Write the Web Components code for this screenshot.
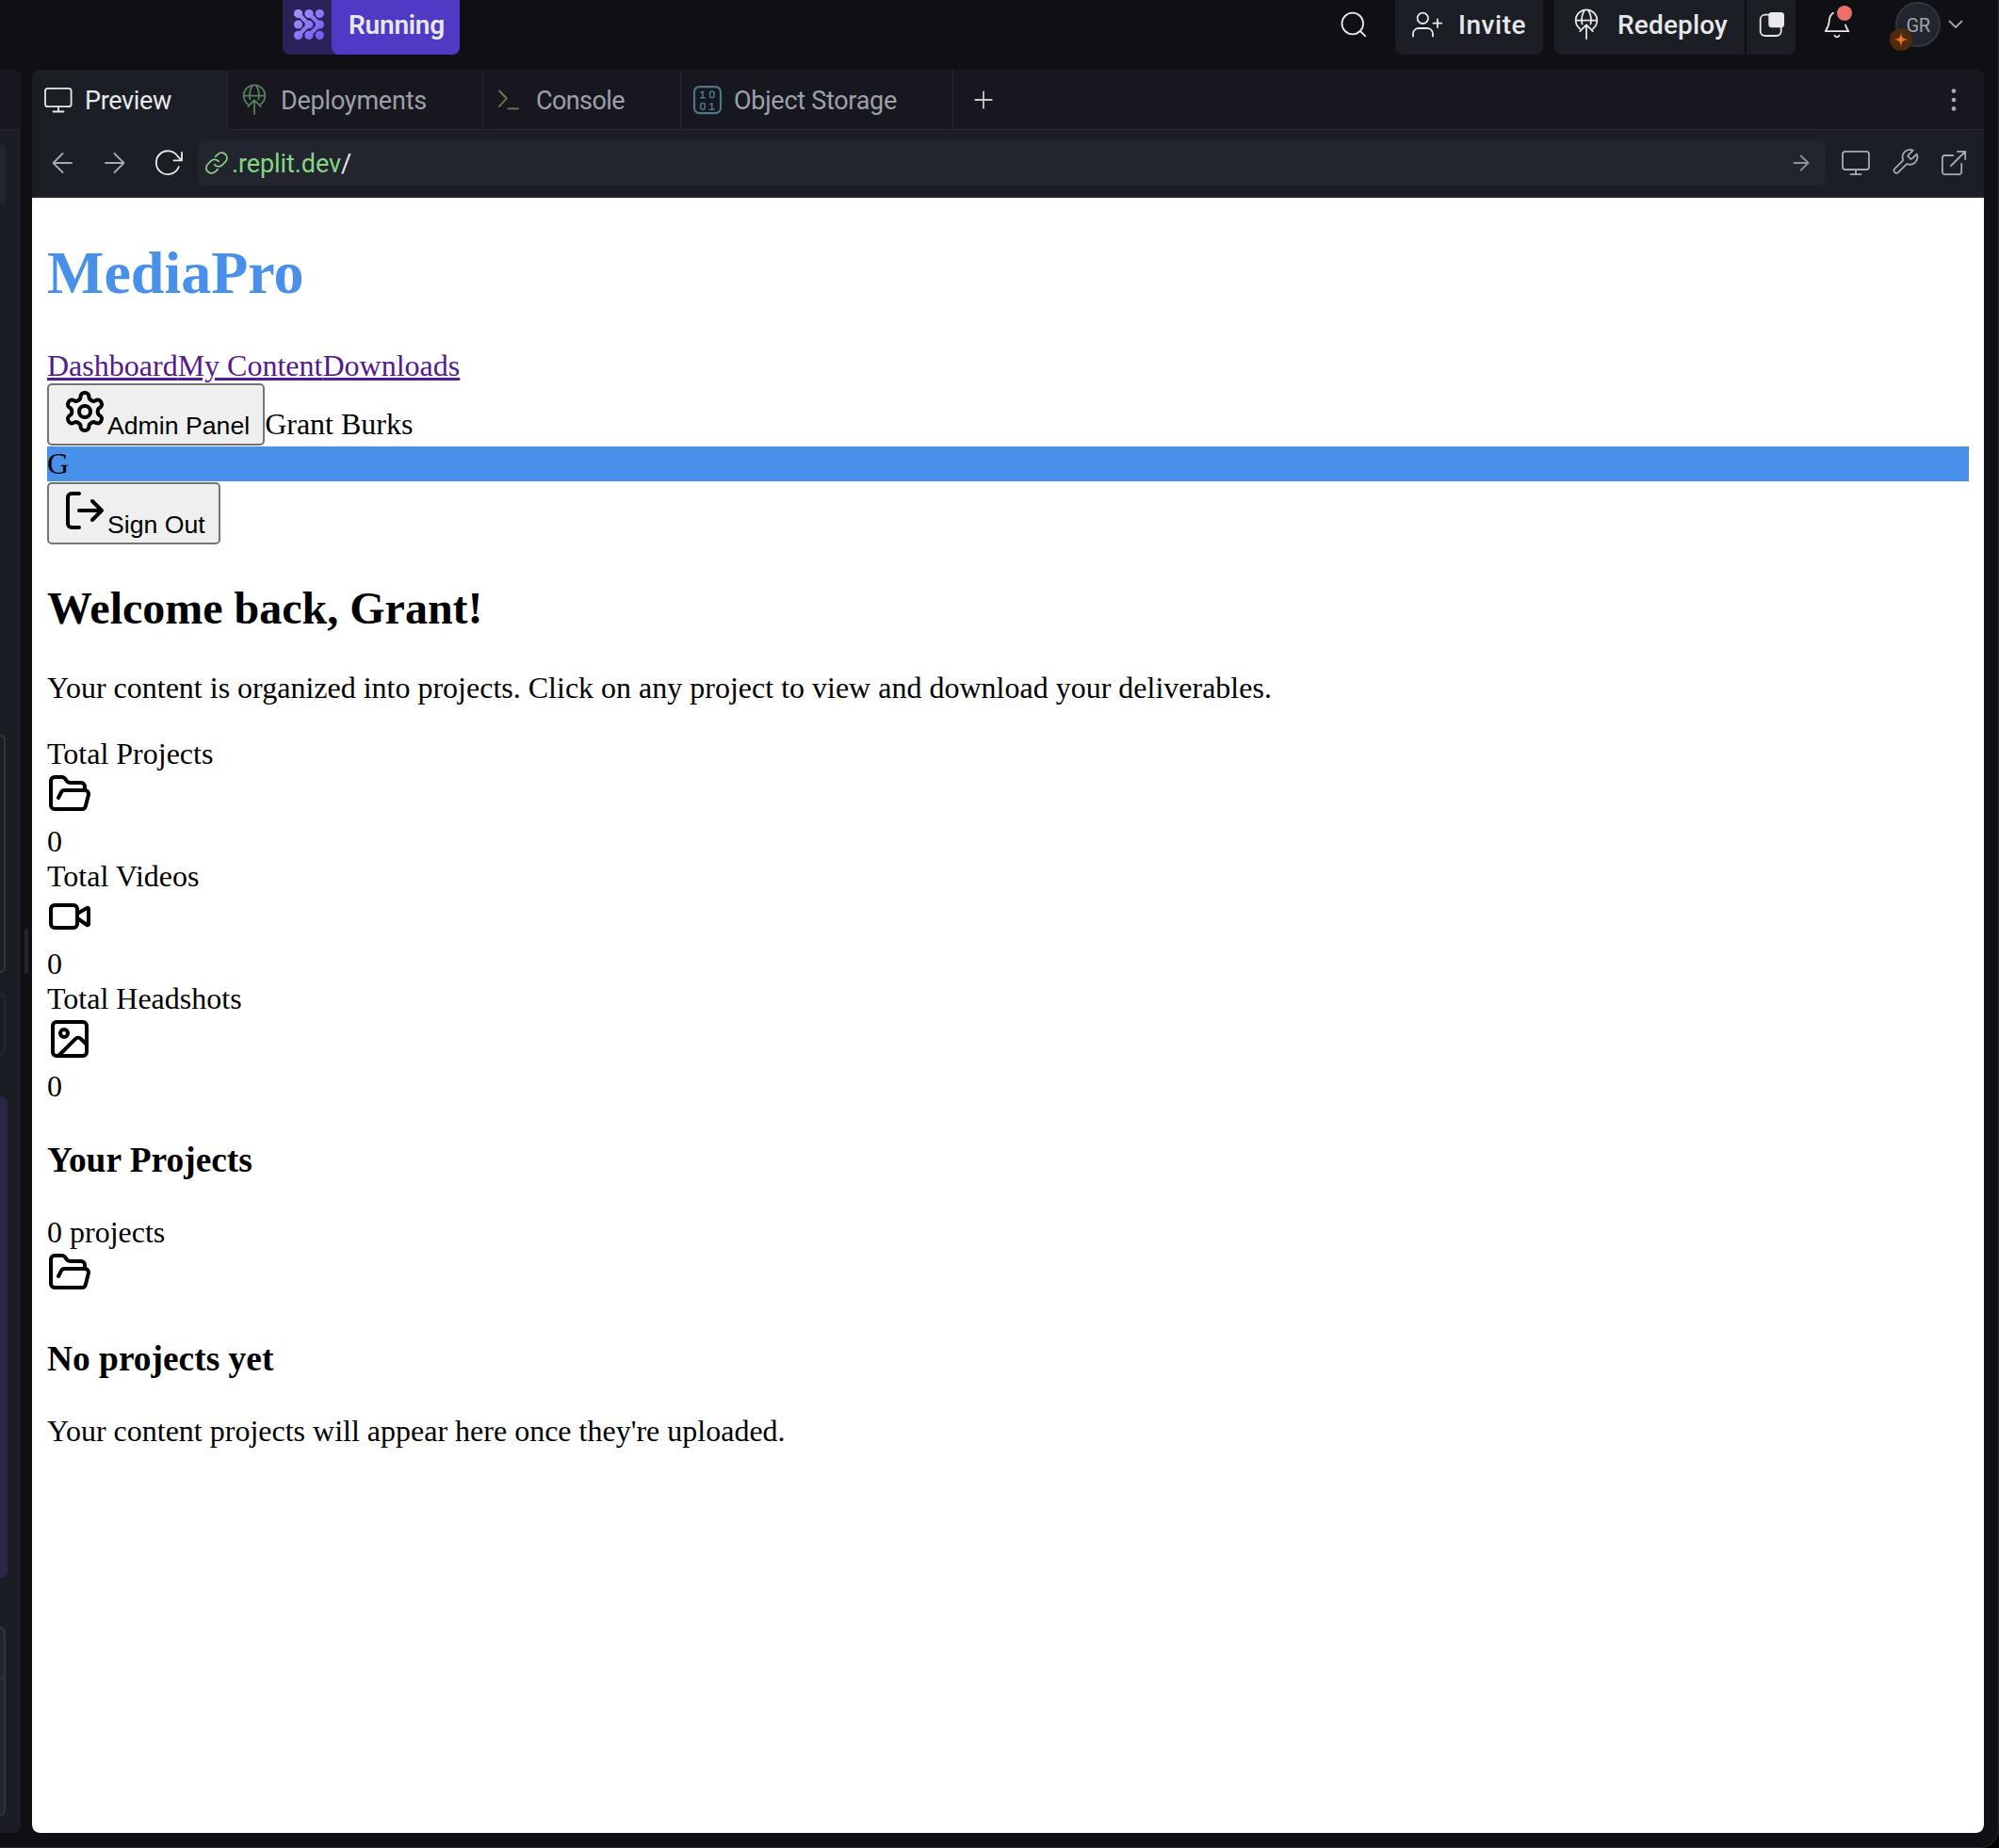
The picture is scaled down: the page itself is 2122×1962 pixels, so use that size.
<!DOCTYPE html>
<html lang="en">
<head>
<meta charset="utf-8">
<title>MediaPro - Preview</title>
<style>
html{background:#000}
body{margin:0;width:2122px;height:1962px;overflow:hidden}
</style>
</head>
<body>
<app-window></app-window>
<script>
const define = (name, html, setup) => customElements.define(name, class extends HTMLElement {
  connectedCallback() {
    if (this.shadowRoot) return;
    const t = document.createElement('template');
    t.innerHTML = typeof html === 'function' ? html(this) : html;
    this.attachShadow({ mode: 'open' }).appendChild(t.content.cloneNode(true));
    if (setup) setup(this);
  }
});

/* name: [viewBox, markup]; the box size is the size of the viewBox */
const globe = (x, y) => `<g transform="translate(${x} ${y})"><path d="M-7 8.9A11.3 11.3 0 1 1 7 8.9M-11.2 0H11.2M-4.5 4C-5.8-1-4.6-7.500-1.800-11M4.500 4C5.800-1 4.600-7.500 1.800-11M0 5V19.500M-6.800 11.500L0 4.700L6.800 11.500"/></g>`;
const ICONS = {
  agent: ['308 6 40 40', `<defs><linearGradient id="g" x1="312" y1="10" x2="344" y2="42" gradientUnits="userSpaceOnUse"><stop stop-color="#a698fb"/><stop offset="1" stop-color="#6f55f2"/></linearGradient></defs>
    <g fill="url(#g)" stroke="none"><circle cx="316.600" cy="14.600" r="4.600"/><circle cx="328" cy="14.600" r="4.600"/><circle cx="339.400" cy="14.600" r="4.600"/><circle cx="316.600" cy="26" r="4.600"/><circle cx="328" cy="26" r="4.300"/><circle cx="339.400" cy="26" r="4.600"/><circle cx="316.600" cy="37.400" r="4.600"/><circle cx="328" cy="37.400" r="4.600"/><circle cx="339.400" cy="37.400" r="4.600"/></g>
    <g stroke="url(#g)" stroke-width="4.200"><path d="M316.600 14.600L328 26L316.600 37.400M328 14.600L339.400 26L328 37.400"/></g>`],
  search: ['1420 10 32 32', '<circle cx="1435.800" cy="25" r="11.300"/><path d="M1444 33L1449.300 38.300"/>'],
  invite: ['1496 10 36 32', '<circle cx="1510.300" cy="19.300" r="5.700"/><path d="M1500 38.500V35.500A6 6 0 0 1 1506 30H1515A6 6 0 0 1 1521 35.500V38.500M1526 20.500V29M1521.500 24.700H1530.300"/>'],
  redeploy: ['1668 10 32 32', globe(1684, 21.6)],
  copy: ['1866 10 30 32', '<rect x="1868.700" y="15.700" width="22" height="22.300" rx="5"/><rect x="1877.300" y="13" width="16.700" height="16.300" rx="3.500" fill="#e9eaee" stroke="none"/>'],
  bell: ['1934 4 36 44', '<path d="M1946 13.800C1942.700 16 1942 18.500 1941.800 22C1941.600 27 1940.500 29 1937.800 33.200H1962.300C1960.800 31 1959.800 29.500 1959 26.500"/><path d="M1947.500 37.600C1948.800 40 1951.200 40 1952.500 37.600"/><circle cx="1958" cy="14" r="8" fill="#f07069" stroke="none"/>'],
  chev: ['2066 16 20 20', '<path d="M2069.500 22.500L2076 29L2082.500 22.500"/>'],
  star: ['2006 30 24 24', '<path fill="currentColor" stroke="none" d="M2018 34C2018.700 40 2019.700 41.300 2026 42C2019.700 42.700 2018.700 44 2018 50C2017.300 44 2016.300 42.700 2010 42C2016.300 41.300 2017.300 40 2018 34Z"/>'],
  monitor: ['46 90 32 32', '<rect x="48" y="93.800" width="27.600" height="19.400" rx="2.800"/><path d="M62 113.500V118.500M56.500 118.500H67.500"/>'],
  deploy: ['254 90 32 32', globe(270, 101.6)],
  console: ['526 90 32 32', '<path d="M528 96.500L535.800 104.500L528 113M537.500 115.400H548"/>'],
  storage: ['735 90 32 32', '<rect x="737" y="92.200" width="28" height="28" rx="5.500" stroke-width="2.200"/><path stroke-width="1.500" d="M744 98.400L746 97V103.800M743.600 103.800H748.400M753.800 110.900L755.800 109.500V116.300M753.400 116.300H758.200"/><rect x="753.600" y="97" width="4.400" height="6.800" rx="2" stroke-width="1.500"/><rect x="743.800" y="109.500" width="4.400" height="6.800" rx="2" stroke-width="1.500"/>'],
  plus: ['1032 94 24 24', '<path d="M1044 97.300V114.700M1035.300 106H1052.700"/>'],
  dots: ['2066 90 16 32', '<g fill="currentColor" stroke="none"><circle cx="2074" cy="96.600" r="2.300"/><circle cx="2074" cy="106" r="2.300"/><circle cx="2074" cy="115.400" r="2.300"/></g>'],
  back: ['54 161 24 24', '<path d="M76 173H56.500M66.500 163L56.500 173L66.500 183"/>'],
  fwd: ['110 161 24 24', '<path d="M112 173H131.500M121.500 163L131.500 173L121.500 183"/>'],
  reload: ['163 157 32 32', '<path d="M189.800 177A12.400 12.400 0 1 1 188.500 165.800L192.800 170.200M193 162V170.400H184.500"/>'],
  link: ['218 161 24 24', '<g transform="translate(216.600 159.700) scale(1.110)" stroke-width="1.500"><path d="M10 13.500a5 5 0 0 0 7.400.4l3-3a5 5 0 0 0-7-7.300l-2.600 2.500"/><path d="M14 10.500a5 5 0 0 0-7.400-.4l-3 3a5 5 0 0 0 7 7.300l2.600-2.500"/></g>'],
  go: ['1902 163 20 20', '<path d="M1904.500 173H1919.500M1911.700 165.500L1919.500 173L1911.700 180.700"/>'],
  device: ['1954 157 32 32', '<rect x="1956" y="160.800" width="28" height="19.200" rx="2.800"/><path d="M1970 180V185.200M1964.500 185.200H1975.500"/>'],
  wrench: ['2007 157 32 32', '<g transform="translate(2006.500 156.300) scale(1.310)"><path stroke-width="1.350" d="M14.700 6.300a1 1 0 0 0 0 1.400l1.600 1.600a1 1 0 0 0 1.400 0l3.770-3.770a6 6 0 0 1-7.940 7.940l-6.910 6.910a2.120 2.120 0 0 1-3-3l6.910-6.910a6 6 0 0 1 7.940-7.940l-3.760 3.760z"/></g>'],
  ext: ['2058 157 32 32', '<path d="M2073.300 165H2064.500A2.600 2.600 0 0 0 2061.900 167.600V182.600A2.600 2.600 0 0 0 2064.500 185.200H2079.500A2.600 2.600 0 0 0 2082.200 182.600V174M2078 160.800H2086.200V169M2086 161L2071 176"/>'],
  gear: ['0 0 24 24', '<path d="M12.220 2h-.44a2 2 0 0 0-2 2v.18a2 2 0 0 1-1 1.730l-.43.25a2 2 0 0 1-2 0l-.15-.08a2 2 0 0 0-2.730.73l-.22.38a2 2 0 0 0 .73 2.730l.15.1a2 2 0 0 1 1 1.720v.51a2 2 0 0 1-1 1.740l-.15.09a2 2 0 0 0-.73 2.730l.22.38a2 2 0 0 0 2.730.73l.15-.08a2 2 0 0 1 2 0l.43.25a2 2 0 0 1 1 1.730V20a2 2 0 0 0 2 2h.44a2 2 0 0 0 2-2v-.18a2 2 0 0 1 1-1.730l.43-.25a2 2 0 0 1 2 0l.15.08a2 2 0 0 0 2.730-.73l.22-.39a2 2 0 0 0-.73-2.730l-.15-.08a2 2 0 0 1-1-1.740v-.5a2 2 0 0 1 1-1.740l.15-.09a2 2 0 0 0 .73-2.730l-.22-.38a2 2 0 0 0-2.730-.73l-.15.08a2 2 0 0 1-2 0l-.43-.25a2 2 0 0 1-1-1.730V4a2 2 0 0 0-2-2z"/><circle cx="12" cy="12" r="3"/>'],
  logout: ['0 0 24 24', '<path d="M9 21H5a2 2 0 0 1-2-2V5a2 2 0 0 1 2-2h4M16 17l5-5-5-5M21 12H9"/>'],
  folder: ['0 0 24 24', '<path d="m6 14 1.500-2.900A2 2 0 0 1 9.240 10H20a2 2 0 0 1 1.940 2.500l-1.540 6a2 2 0 0 1-1.950 1.500H4a2 2 0 0 1-2-2V5a2 2 0 0 1 2-2h3.900a2 2 0 0 1 1.690.9l.81 1.200a2 2 0 0 0 1.670.9H18a2 2 0 0 1 2 2v2"/>'],
  video: ['0 0 24 24', '<path d="m16 13 5.223 3.482a.5.5 0 0 0 .777-.416V7.870a.5.5 0 0 0-.752-.432L16 10.500"/><rect x="2" y="6" width="14" height="12" rx="2"/>'],
  image: ['0 0 24 24', '<rect x="3" y="3" width="18" height="18" rx="2"/><circle cx="9" cy="9" r="2"/><path d="m21 15-3.086-3.086a2 2 0 0 0-2.828 0L6 21"/>']
};

define('ui-icon', el => {
  const [box, body] = ICONS[el.getAttribute('name')];
  const [, , w, h] = box.split(' ');
  const k = el.hasAttribute('double') ? 2 : 1;
  return `<style>:host{display:block;flex:none;width:${w * k}px;height:${h * k}px}svg{display:block;width:100%;height:100%;overflow:visible}</style>
  <svg viewBox="${box}" fill="none" stroke="currentColor" stroke-width="${k === 2 ? 2 : 1.8}" stroke-linecap="round" stroke-linejoin="round">${body}</svg>`;
});

/* One line of text, tracked so that it fills the width given in "w". */
define('ui-label', `<style>:host{display:block;flex:none;white-space:nowrap;line-height:34px;padding-top:2px}span{display:inline-block}</style><span><slot></slot></span>`, el => {
  const span = el.shadowRoot.querySelector('span'), w = +el.getAttribute('w');
  const adv = span.getBoundingClientRect().width;
  el.style.width = w + 'px';
  span.style.letterSpacing = ((w - adv) / el.textContent.length) + 'px';
});

define('user-avatar', `<style>
:host{display:block;flex:none;position:relative;width:48px;height:48px}
.face{box-sizing:border-box;width:48px;height:48px;border-radius:50%;background:#23252e;border:2px solid #33343f;color:#a0a2ac;display:flex;align-items:center;justify-content:center;font-size:20px}
.badge{position:absolute;left:-6px;top:28px;border-radius:50%;background:#4d2b0b;color:#ec7233}
</style><div class="face"><ui-label w="25">GR</ui-label></div><div class="badge"><ui-icon name="star"></ui-icon></div>`);

define('top-bar', `<style>
:host{display:flex;height:74px;align-items:flex-start;color:#e6e7eb;font-size:28px;font-weight:500}
.c{height:52px;display:flex;align-items:center;flex:none}
.b{box-sizing:border-box;height:58px;padding-bottom:6px;display:flex;align-items:center;flex:none;background:#1b1e25}
.run{margin-left:300px;width:188px;background:#2a2158;border-radius:0 0 8px 8px;padding-left:8px;font-weight:600}
.run div{box-sizing:border-box;margin-left:4px;width:136px;height:58px;margin-bottom:-6px;padding:0 0 6px 18px;background:#4f39c5;border-radius:0 0 8px 8px;display:flex;align-items:center}
.inv{margin-left:29px;width:157px;padding-left:15px;gap:16px;border-radius:0 0 8px 8px}
.re{margin-left:12px;width:202px;padding-left:18px;gap:17px;border-radius:0 0 0 8px}
.cp{margin-left:2px;width:52px;padding-left:12px;border-radius:0 0 8px 0}
</style>
<div class="b run"><ui-icon name="agent"></ui-icon><div><ui-label w="102">Running</ui-label></div></div>
<div class="c" style="margin-left:932px"><ui-icon name="search"></ui-icon></div>
<div class="b inv"><ui-icon name="invite"></ui-icon><ui-label w="72">Invite</ui-label></div>
<div class="b re"><ui-icon name="redeploy"></ui-icon><ui-label w="117">Redeploy</ui-label></div>
<div class="b cp"><ui-icon name="copy"></ui-icon></div>
<div class="c" style="margin-left:28px"><ui-icon name="bell"></ui-icon></div>
<div class="c" style="margin-left:42px;font-weight:400"><user-avatar></user-avatar></div>
<div class="c" style="margin-left:6px;color:#a0a2ab"><ui-icon name="chev"></ui-icon></div>`);

define('side-panel', `<style>
:host{box-sizing:border-box;display:block;flex:none;width:22px;background:#1a1d24;border-radius:0 8px 8px 0;overflow:hidden}
div{box-sizing:border-box}
.head{height:64px;background:#17171f;border-bottom:1px solid #25272f}
.card{width:6px;border-radius:0 10px 10px 0;border:2px solid #24272f;border-left:0}
.input{height:201px;margin-top:51px;background:#22252d;border-color:#31343c}
.input div{height:54px;border-bottom:2px solid #31343c;margin-right:-1px}
</style>
<div class="head"></div>
<div class="card" style="margin-top:16px;height:64px;background:#22252d;border-color:#22252d"></div>
<div class="card" style="margin-top:562px;height:253px;border-color:#2b3a38"></div>
<div class="card" style="margin-top:22px;height:65px"></div>
<div style="margin-top:44px;width:8px;height:512px;background:#2b2648;border-radius:0 12px 12px 0"></div>
<div class="card input"><div></div></div>`);

define('tab-item', `<style>
:host{box-sizing:border-box;display:flex;flex:none;align-items:center;height:64px;color:#9da0aa;box-shadow:inset -1px 0 #26272f,inset 0 -1px #26272f}
:host([active]){background:#1b1e25;color:#e8e9ed;box-shadow:inset -1px 0 #26272f}
</style><slot></slot>`);

define('tab-strip', `<style>
:host{display:flex;height:64px;background:#17171f;font-size:27px}
.rest{flex:1;display:flex;align-items:center;justify-content:space-between;padding:0 24px 0 20px;box-shadow:inset 0 -1px #26272f}
</style>
<tab-item active style="width:208px;padding-left:12px;gap:12px"><ui-icon name="monitor"></ui-icon><ui-label w="92">Preview</ui-label></tab-item>
<tab-item style="width:271px;padding-left:12px;gap:12px"><ui-icon name="deploy" style="color:#558058"></ui-icon><ui-label w="155">Deployments</ui-label></tab-item>
<tab-item style="width:210px;padding-left:15px;gap:9px"><ui-icon name="console" style="color:#7d7648"></ui-icon><ui-label w="94">Console</ui-label></tab-item>
<tab-item style="width:289px;padding-left:12px;gap:12px"><ui-icon name="storage" style="color:#4a7787"></ui-icon><ui-label w="173">Object Storage</ui-label></tab-item>
<div class="rest"><ui-icon name="plus" style="color:#c8c9ce"></ui-icon><ui-icon name="dots" style="color:#a8abb4"></ui-icon></div>`);

define('address-bar', `<style>
:host{box-sizing:border-box;display:flex;align-items:center;height:72px;padding:0 16px 2px 20px;background:#1b1e25;box-shadow:inset 0 -2px #25272f;color:#a6a9b2;font-size:27px}
.url{box-sizing:border-box;width:1728px;height:48px;margin:0 16px 0 15px;padding:0 16px 0 8px;border-radius:8px;background:#22252d;display:flex;align-items:center;color:#86d684}
</style>
<ui-icon name="back"></ui-icon>
<ui-icon name="fwd" style="margin-left:32px"></ui-icon>
<ui-icon name="reload" style="margin-left:29px;color:#e8e9ed"></ui-icon>
<div class="url"><ui-icon name="link"></ui-icon><ui-label w="116" style="margin-left:4px">.replit.dev</ui-label><ui-label w="8" style="color:#e8e9ed">/</ui-label><ui-icon name="go" style="margin-left:auto;color:#8d9099"></ui-icon></div>
<ui-icon name="device"></ui-icon>
<ui-icon name="wrench" style="margin-left:21px"></ui-icon>
<ui-icon name="ext" style="margin-left:19px"></ui-icon>`);

define('plain-button', el => `<style>
:host{display:block;flex:none}
button{box-sizing:border-box;height:66px;margin:0;padding:4px 14px 0;border:2px solid #757575;border-radius:5px;background:#efefef;color:#000;font:26.667px "Liberation Sans",Arial,sans-serif;display:flex;align-items:flex-start}
span{display:block;line-height:31px;padding-top:24px;white-space:nowrap}
</style><button><ui-icon name="${el.getAttribute('icon')}" double></ui-icon><span><slot></slot></span></button>`);

define('stat-block', el => `<style>:host{display:block}div{height:37px}ui-icon{margin-bottom:8px}</style>
<div><slot></slot></div><ui-icon name="${el.getAttribute('icon')}" double></ui-icon><div>0</div>`);

define('media-page', `<style>
:host{display:flow-root;flex:1;background:#fff;color:#000;padding:0 16px;font:32px/37px "Liberation Serif","Times New Roman",serif;border-radius:0 0 8px 8px}
h1{margin:43px 0;font-size:64px;line-height:74px;color:#4990ea}
h2{margin:40px 0 39px;font-size:48px;line-height:55px}
h3{margin:38px 0 37px;font-size:37.440px;line-height:43px}
p{margin:0 0 33px}
nav{height:37px}
a{color:#551a8b;text-decoration:underline}
.row{display:flex;height:67px}
.row>span{padding-top:25px}
.bar{height:37px;background:#4990ea}
.pad{height:56px}
</style>
<h1>MediaPro</h1>
<nav><a>Dashboard</a><a>My Content</a><a>Downloads</a></nav>
<div class="row"><plain-button icon="gear">Admin Panel</plain-button><span>Grant Burks</span></div>
<div class="bar">G</div>
<div class="row"><plain-button icon="logout" style="margin-top:1px">Sign Out</plain-button></div>
<h2>Welcome back, Grant!</h2>
<p>Your content is organized into projects. Click on any project to view and download your deliverables.</p>
<stat-block icon="folder">Total Projects</stat-block>
<stat-block icon="video">Total Videos</stat-block>
<stat-block icon="image">Total Headshots</stat-block>
<h3>Your Projects</h3>
<div>0 projects</div>
<div class="pad"><ui-icon name="folder" double></ui-icon></div>
<h3>No projects yet</h3>
<p>Your content projects will appear here once they're uploaded.</p>`);

define('app-window', `<style>
:host{box-sizing:border-box;display:flex;flex-direction:column;width:2122px;height:1962px;background:#0e1014;border:solid #28282e;border-width:0 1px 1px 0;border-radius:0 0 20px 0;font-family:Roboto,sans-serif}
main{display:flex;height:1872px}
.gutter{width:12px;display:flex;align-items:center;justify-content:center;flex:none}
.gutter i{display:block;width:4px;height:48px;border-radius:2px;background:#262632}
.pane{width:2072px;flex:none;display:flex;flex-direction:column;border-radius:8px;overflow:hidden}
</style>
<top-bar></top-bar>
<main><side-panel></side-panel><div class="gutter"><i></i></div>
<div class="pane"><tab-strip></tab-strip><address-bar></address-bar><media-page></media-page></div></main>`);
</script>
</body>
</html>
